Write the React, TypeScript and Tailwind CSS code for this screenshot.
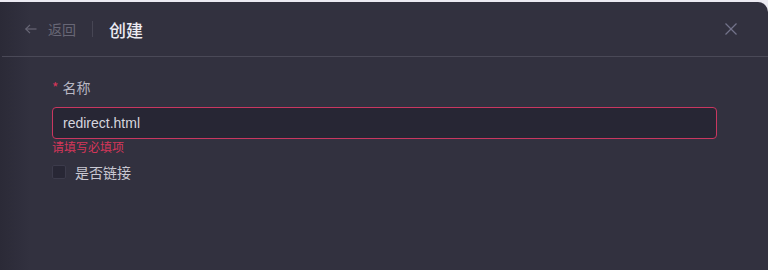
import * as React from "react";

function BackArrow() {
  return (
    <svg width="14" height="14" viewBox="0 0 14 14" fill="none" stroke="currentColor" strokeWidth="1.2">
      <path d="M12.5 7H1.8" />
      <path d="M6 2.8L1.8 7L6 11.2" />
    </svg>
  );
}

function CloseIcon() {
  return (
    <svg width="14" height="14" viewBox="0 0 14 14" fill="none" stroke="currentColor" strokeWidth="1.3">
      <path d="M1.5 1.5L12.5 12.5" />
      <path d="M12.5 1.5L1.5 12.5" />
    </svg>
  );
}

export default function App() {
  const [name, setName] = React.useState("redirect.html");
  const [isLink, setIsLink] = React.useState(false);

  return (
    <div
      className="h-[270px] w-[768px] overflow-hidden bg-[#eceaf2] pt-[2px]"
      style={{ fontFamily: '"Noto Sans CJK SC", "Noto Sans", sans-serif' }}
    >
      <div className="h-full w-full rounded-tr-[10px] bg-[#32313f] bg-[linear-gradient(90deg,#2b2a37_0px,#302f3d_22px,#32313f_30px)]">
        {/* Header */}
        <div className="ml-[2px] flex h-[55px] items-center border-b border-[#4a4957] pl-[22px] pr-[30px]">
          <button className="flex items-center gap-[10px] text-[#686776]">
            <BackArrow />
            <span className="text-[14px] leading-none">返回</span>
          </button>
          <div className="mx-[16px] h-[16px] w-px bg-[#474654]" />
          <h1 className="text-[17px] font-medium leading-none text-[#ecebf2]">创建</h1>
          <button className="ml-auto text-[#73728a]">
            <CloseIcon />
          </button>
        </div>

        {/* Form */}
        <div className="pl-[52px] pr-[51px] pt-[20px]">
          <label className="flex items-center text-[14px] leading-[20px] text-[#b9b8c4]">
            <span className="mr-[4px] text-[#d6365a]">*</span>
            名称
          </label>
          <input
            value={name}
            onChange={(e) => setName(e.target.value)}
            className="mt-[10px] h-[32px] w-full rounded-[4px] border border-[#c93760] bg-[#272634] px-[10px] text-[14px] text-[#d6d5de] outline-none"
            style={{ fontFamily: '"Liberation Sans", Arial, sans-serif' }}
          />
          <div className="text-[12px] leading-[16px] text-[#d6365a]">请填写必填项</div>
          <label className="mt-[7px] flex cursor-pointer items-center gap-[9px] text-[14px] leading-[20px] text-[#c9c8d2]">
            <span
              onClick={() => setIsLink(!isLink)}
              className="h-[14px] w-[14px] rounded-[2px] border border-[#3c3b4b] bg-[#282735]"
            />
            是否链接
          </label>
        </div>
      </div>
    </div>
  );
}
